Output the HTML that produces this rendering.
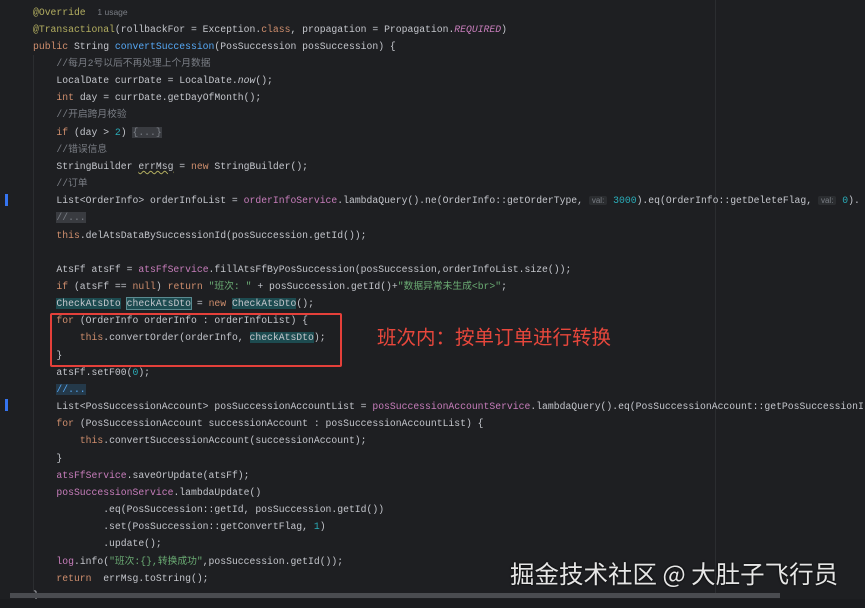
<!DOCTYPE html>
<html><head><meta charset="utf-8"><style>
html,body{margin:0;padding:0;background:#1e1f22;width:865px;height:608px;overflow:hidden;position:relative}
pre{position:absolute;left:33px;top:3.5px;margin:0;font-family:"Liberation Mono","Noto Sans CJK SC",monospace;font-size:9.75px;line-height:17.15px;color:#c4c6cc;white-space:pre}
.k{color:#cf8e6d}.c{color:#7a7e85}.m{color:#56a8f5}.f{color:#c77dbb}.n{color:#2aacb8}.s{color:#6aab73}.a{color:#b3ae60}
.h{background:#1d4b50}.hb{background:#1d4b50;outline:1px solid #5a8a90}
.fold{background:#393b40;color:#7a7e85}
.hint{background:#2b2d30;color:#7a7e85;font-family:"Liberation Sans",sans-serif;font-size:8px;padding:0 3px;border-radius:2px}
.u{color:#7a7e85;font-family:"Liberation Sans",sans-serif;font-size:8.5px}
.w{text-decoration:underline wavy #b3ae60;text-decoration-thickness:1px}
</style></head><body>
<div style="position:absolute;left:715px;top:0;width:1px;height:595px;background:#2b2d30"></div>
<div style="position:absolute;left:33px;top:55px;width:1px;height:535px;background:#2b2d30"></div>
<div style="position:absolute;left:5px;top:194px;width:3px;height:12px;background:#3574f0"></div>
<div style="position:absolute;left:5px;top:399px;width:3px;height:12px;background:#3574f0"></div>
<pre><span class="a">@Override</span>  <span class="u">1 usage</span>
<span class="a">@Transactional</span>(rollbackFor = Exception.<span class="k">class</span>, propagation = Propagation.<span class="f"><i>REQUIRED</i></span>)
<span class="k">public</span> String <span class="m">convertSuccession</span>(PosSuccession posSuccession) {
    <span class="c">//每月2号以后不再处理上个月数据</span>
    LocalDate currDate = LocalDate.<i>now</i>();
    <span class="k">int</span> day = currDate.getDayOfMonth();
    <span class="c">//开启跨月校验</span>
    <span class="k">if</span> (day &gt; <span class="n">2</span>) <span class="fold">{...}</span>
    <span class="c">//错误信息</span>
    StringBuilder <span class="w">errMsg</span> = <span class="k">new</span> StringBuilder();
    <span class="c">//订单</span>
    List&lt;OrderInfo&gt; orderInfoList = <span class="f">orderInfoService</span>.lambdaQuery().ne(OrderInfo::getOrderType, <span class="hint">val:</span> <span class="n">3000</span>).eq(OrderInfo::getDeleteFlag, <span class="hint">val:</span> <span class="n">0</span>).
    <span class="fold">//...</span>
    <span class="k">this</span>.delAtsDataBySuccessionId(posSuccession.getId());

    AtsFf atsFf = <span class="f">atsFfService</span>.fillAtsFfByPosSuccession(posSuccession,orderInfoList.size());
    <span class="k">if</span> (atsFf == <span class="k">null</span>) <span class="k">return</span> <span class="s">"班次: "</span> + posSuccession.getId()+<span class="s">"数据异常未生成&lt;br&gt;"</span>;
    <span class="h">CheckAtsDto</span> <span class="hb">checkAtsDto</span> = <span class="k">new</span> <span class="h">CheckAtsDto</span>();
    <span class="k">for</span> (OrderInfo orderInfo : orderInfoList) {
        <span class="k">this</span>.convertOrder(orderInfo, <span class="h">checkAtsDto</span>);
    }
    atsFf.setF00(<span class="n">0</span>);
    <span class="fold" style="color:#56a8f5;background:#24394a">//...</span>
    List&lt;PosSuccessionAccount&gt; posSuccessionAccountList = <span class="f">posSuccessionAccountService</span>.lambdaQuery().eq(PosSuccessionAccount::getPosSuccessionI
    <span class="k">for</span> (PosSuccessionAccount successionAccount : posSuccessionAccountList) {
        <span class="k">this</span>.convertSuccessionAccount(successionAccount);
    }
    <span class="f">atsFfService</span>.saveOrUpdate(atsFf);
    <span class="f">posSuccessionService</span>.lambdaUpdate()
            .eq(PosSuccession::getId, posSuccession.getId())
            .set(PosSuccession::getConvertFlag, <span class="n">1</span>)
            .update();
    <span class="f">log</span>.info(<span class="s">"班次:{},转换成功"</span>,posSuccession.getId());
    <span class="k">return</span>  errMsg.toString();
}</pre>
<div style="position:absolute;left:50px;top:313px;width:288px;height:50px;border:2px solid #e5403a;border-radius:2px"></div>
<div style="position:absolute;left:377px;top:323px;color:#e8473c;font-family:'Noto Sans CJK SC',sans-serif;font-size:19.5px;line-height:26px;white-space:nowrap">班次内：按单订单进行转换</div>
<div style="position:absolute;left:10px;top:593px;width:770px;height:5px;background:#4a4c50"></div>
<div style="position:absolute;left:0;top:599px;width:865px;height:9px;background:#1b1c1f"></div>
<div style="position:absolute;left:510px;top:558px;color:#e6e6e6;font-family:'Noto Sans CJK SC',sans-serif;font-size:24.5px;line-height:32px;white-space:nowrap;text-shadow:0 0 2px #000">掘金技术社区 @ 大肚子飞行员</div>
</body></html>
